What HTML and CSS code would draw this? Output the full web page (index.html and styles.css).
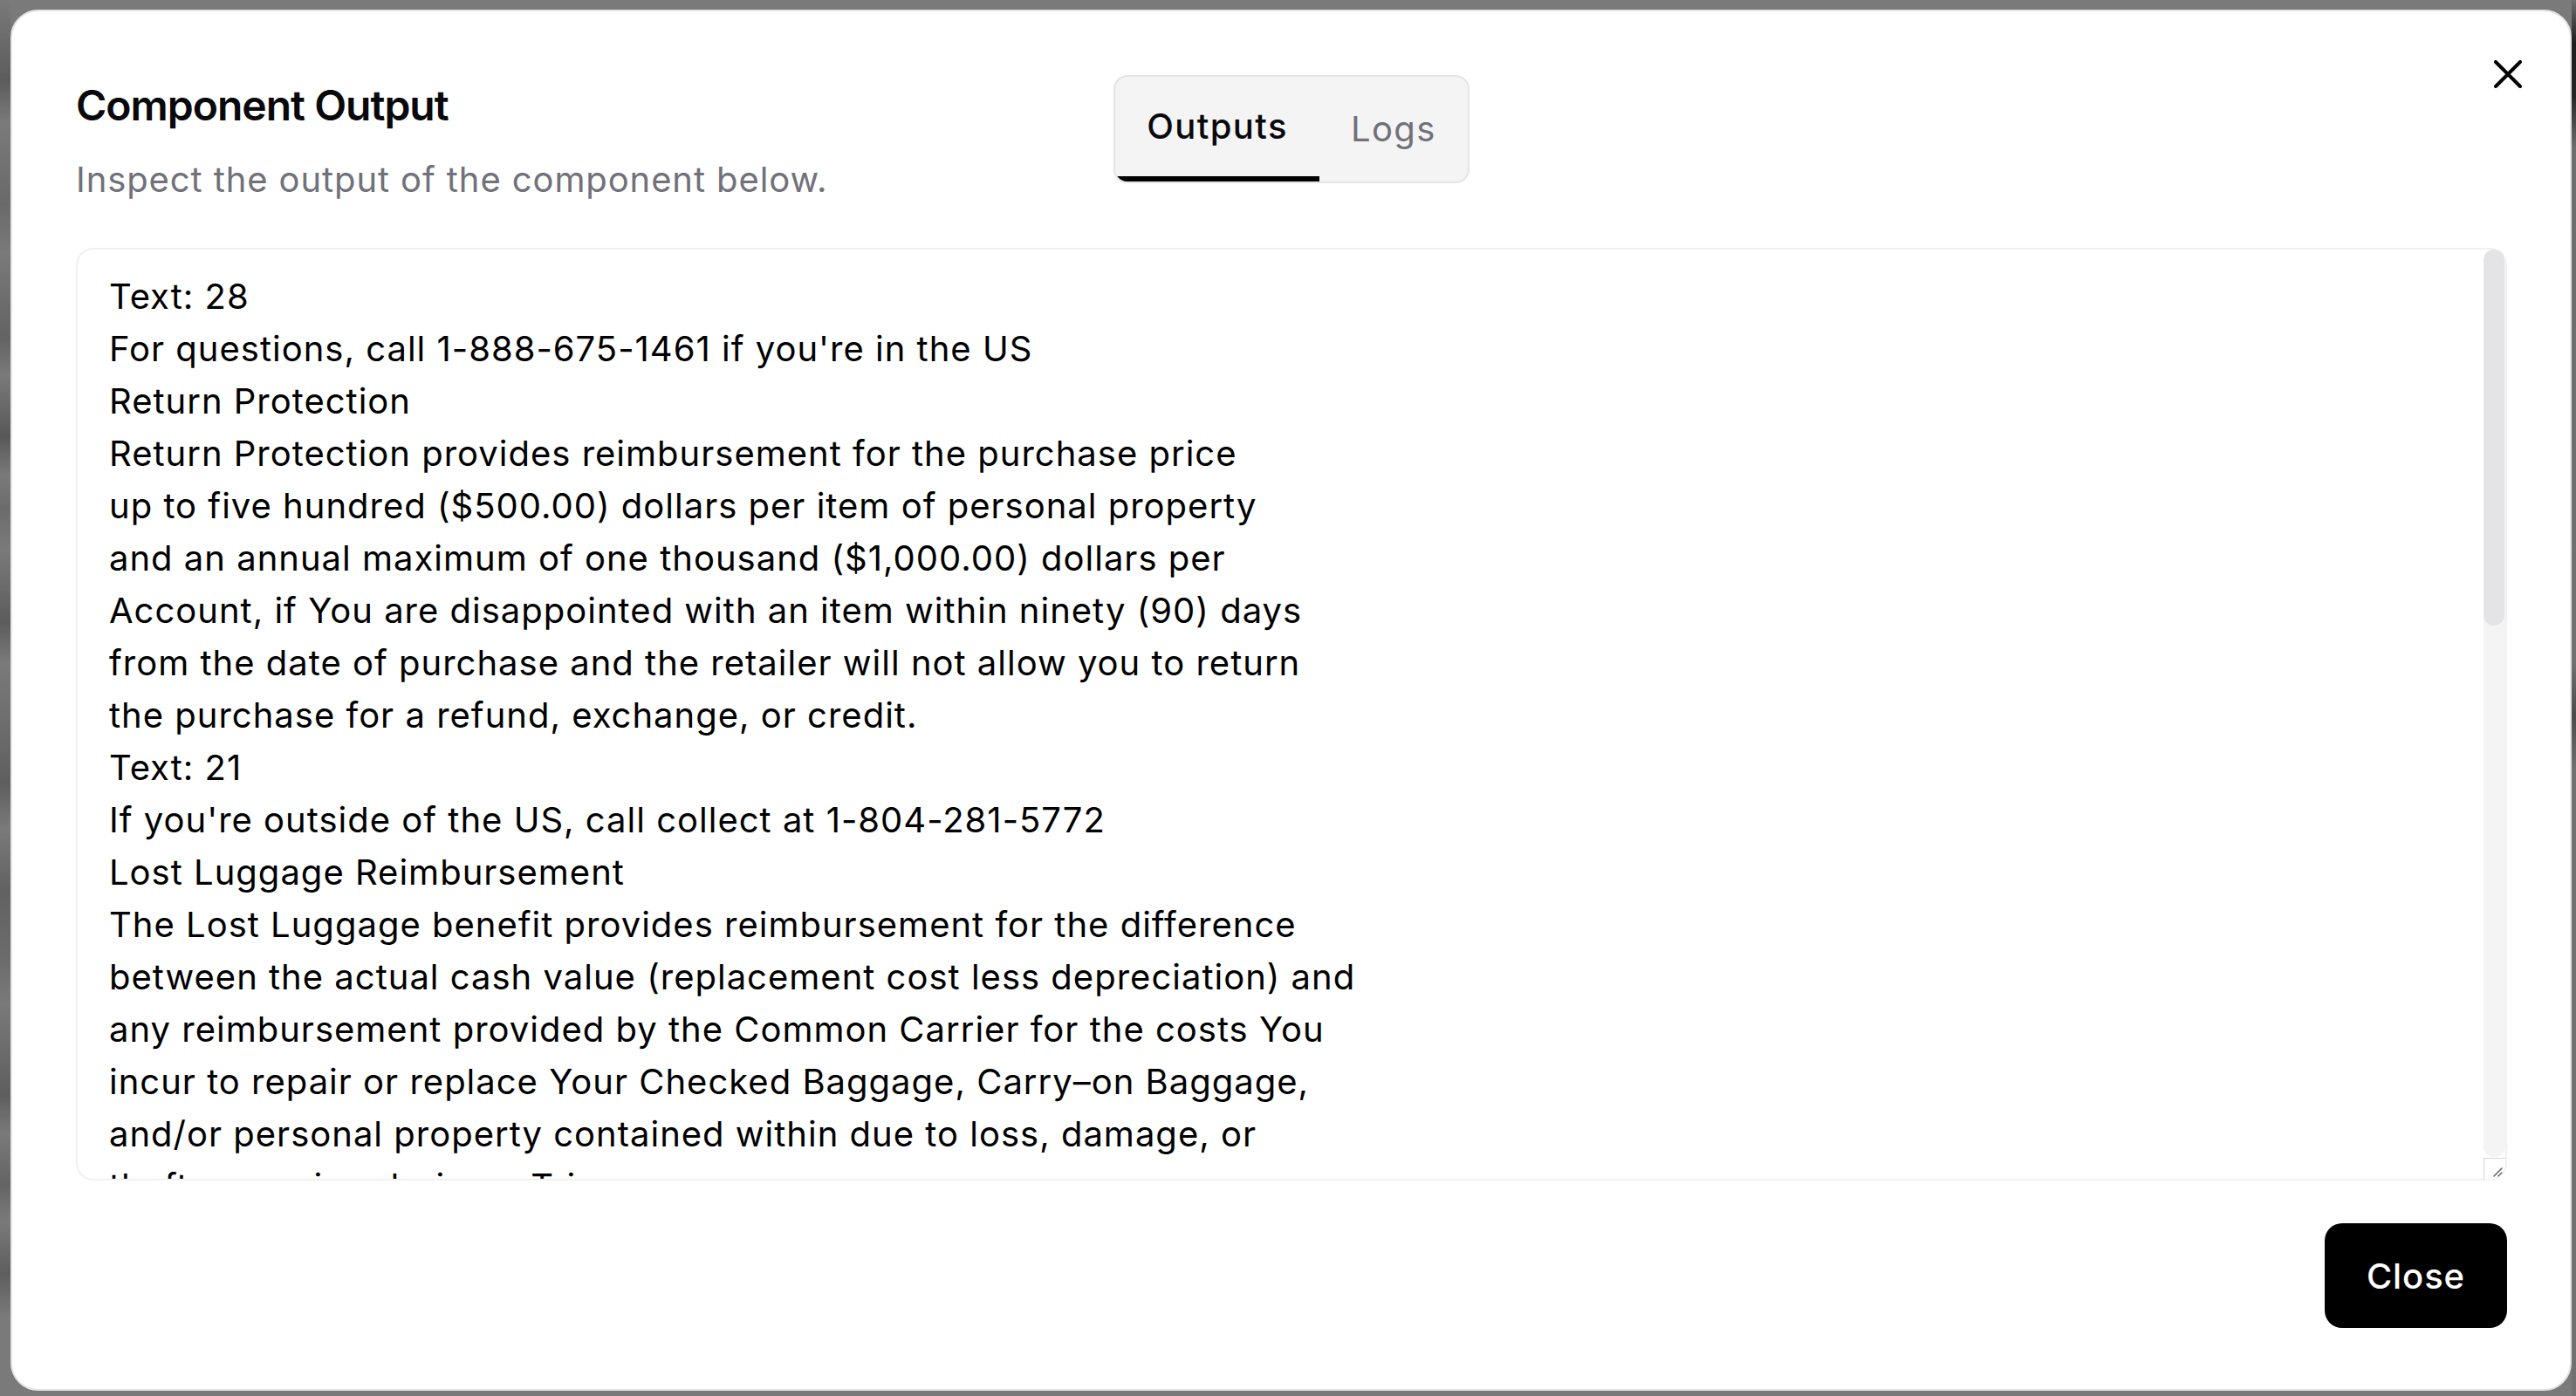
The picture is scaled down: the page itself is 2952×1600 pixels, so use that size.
FILE: index.html
```html
<!DOCTYPE html>
<html lang="en">
<head>
<meta charset="utf-8">
<title>Component Output</title>
<link rel="stylesheet" href="styles.css">
</head>
<body>
<div class="backdrop">
  <div class="dialog" role="dialog">
    <button class="close-x" aria-label="Close">
      <svg width="32" height="32" viewBox="0 0 32 32" fill="none" stroke="currentColor" stroke-width="4" stroke-linecap="round"><path d="M2 2L30 30M30 2L2 30"/></svg>
    </button>
    <div class="header">
      <div class="heading">
        <h2 class="title">Component Output</h2>
        <p class="desc">Inspect the output of the component below.</p>
      </div>
      <div class="tabs">
        <button class="tab active">Outputs</button>
        <button class="tab">Logs</button>
      </div>
      <div class="spacer"></div>
    </div>
    <div class="field">
      <textarea class="output" readonly>Text: 28
For questions, call 1-888-675-1461 if you're in the US
Return Protection
Return Protection provides reimbursement for the purchase price
up to five hundred ($500.00) dollars per item of personal property
and an annual maximum of one thousand ($1,000.00) dollars per
Account, if You are disappointed with an item within ninety (90) days
from the date of purchase and the retailer will not allow you to return
the purchase for a refund, exchange, or credit.
Text: 21
If you're outside of the US, call collect at 1-804-281-5772
Lost Luggage Reimbursement
The Lost Luggage benefit provides reimbursement for the difference
between the actual cash value (replacement cost less depreciation) and
any reimbursement provided by the Common Carrier for the costs You
incur to repair or replace Your Checked Baggage, Carry–on Baggage,
and/or personal property contained within due to loss, damage, or
theft occurring during a Trip.
Text: 25
Call the Benefit Administrator at 1-888-675-1461
Baggage Delay Reimbursement
Baggage Delay reimburses You for the emergency purchase of
essential items needed by You and Your Immediate Family Members
as a result of a Baggage Delay for up to one hundred ($100.00)
dollars per day for a maximum of five (5) days.
Text: 19
Claims must be filed within sixty (60) days of the loss
Trip Delay Reimbursement
If Your Common Carrier travel is delayed more than twelve (12)
hours or requires an overnight stay, You and Your Immediate
Family Members are covered for reasonable expenses such as
meals, lodging, toiletries, medication and other personal use
items, up to five hundred ($500.00) dollars per ticket.
Text: 17
Coverage applies only when the entire fare is charged to Your Account
Trip Cancellation and Trip Interruption
If Your Trip is canceled or cut short by sickness, severe weather
and other covered situations, You can be reimbursed up to ten
thousand ($10,000.00) dollars per person and twenty thousand
($20,000.00) dollars per Trip for Your pre-paid, non-refundable
travel expenses, including passenger fares, tours and hotels.
Text: 14</textarea>
      <div class="scrollbar" aria-hidden="true">
        <div class="track"><div class="thumb"></div></div>
        <div class="resizer">
          <svg width="24" height="24" viewBox="0 0 24 24" fill="none" stroke="#6b6b6b" stroke-width="1.6" stroke-linecap="round"><path d="M20 11L11 20M20 16L16 20"/></svg>
        </div>
      </div>
    </div>
    <div class="footer">
      <button class="btn-close">Close</button>
    </div>
  </div>
</div>
</body>
</html>
```
FILE: styles.css
```css
html, body {
  margin: 0;
  height: 100%;
}

body {
  font-family: Inter, "Noto Sans", sans-serif;
  background: #7a7a7a;
  overflow: hidden;
}

.backdrop {
  box-sizing: border-box;
  height: 1600px;
  padding: 11px 5px 6px 12px;
  display: flex;
  background:
    linear-gradient(to bottom,
      #7a7a7a 0, #5c5c5c 92px, #7a7a7a 140px,
      #6a6a6a 235px, #7a7a7a 290px,
      #636363 388px, #7a7a7a 430px,
      #585858 500px, #7a7a7a 545px,
      #6c6c6c 582px, #7a7a7a 630px,
      #5c5c5c 714px, #7a7a7a 760px,
      #6a6a6a 847px, #5e5e5e 898px, #7a7a7a 950px,
      #626262 1020px, #6c6c6c 1102px, #7a7a7a 1150px,
      #5e5e5e 1255px, #7a7a7a 1300px,
      #646464 1357px, #7a7a7a 1400px,
      #5e5e5e 1459px, #7a7a7a 1510px) left top / 12px 100% no-repeat,
    linear-gradient(to bottom,
      #6e6e6e 0, #1e1e1e 50px, #262626 110px, #6e6e6e 170px,
      #707070 760px, #4c4c4c 820px, #707070 880px, #707070 100%) right top / 5px 100% no-repeat,
    #7a7a7a;
}

.dialog {
  position: relative;
  flex: 1;
  box-sizing: border-box;
  display: flex;
  flex-direction: column;
  background: #ffffff;
  border: 2px solid #e4e4e7;
  border-radius: 32px;
  padding: 72px 72px 70px 73px;
}

.close-x {
  position: absolute;
  top: 56px;
  right: 55px;
  width: 32px;
  height: 32px;
  padding: 0;
  border: 0;
  background: none;
  color: #000;
  display: flex;
}

.header {
  display: grid;
  grid-template-columns: 1fr auto 1fr;
  align-items: start;
}

.title {
  margin: 0;
  font-size: 48px;
  font-weight: 600;
  line-height: 72px;
  color: #09090b;
  letter-spacing: -1px;
}

.desc {
  margin: 19px 0 0;
  font-size: 40px;
  line-height: 60px;
  color: #71717a;
  letter-spacing: 0.9px;
}

.tabs {
  margin-top: 1px;
  display: flex;
  box-sizing: border-box;
  height: 124px;
  border: 2px solid #e4e4e7;
  border-radius: 16px;
  background: #f4f4f5;
  overflow: hidden;
}

.tab {
  box-sizing: border-box;
  height: 120px;
  display: flex;
  align-items: center;
  padding: 0 36px;
  border: 0;
  background: none;
  font-family: Inter, "Noto Sans", sans-serif;
  font-size: 40px;
  line-height: 60px;
  font-weight: 400;
  letter-spacing: 1.4px;
  color: #71717a;
}

.tab.active {
  color: #09090b;
  font-weight: 500;
  border-bottom: 6px solid #000;
}

.field {
  position: relative;
  flex: 1 1 0;
  min-height: 0;
  margin-top: 48px;
  display: flex;
}

.output {
  flex: 1;
  box-sizing: border-box;
  height: 100%;
  border: 2px solid #f1f1f2;
  border-radius: 20px;
  padding: 24px 64px 24px 36px;
  font-family: Inter, "Noto Sans", sans-serif;
  font-size: 40px;
  line-height: 60px;
  letter-spacing: 1px;
  color: #000;
  background: #fff;
  outline: none;
  resize: none;
  overflow: hidden;
}

.scrollbar {
  position: absolute;
  top: 2px;
  right: 2px;
  bottom: 1px;
  width: 25px;
  display: flex;
  flex-direction: column;
}

.track {
  flex: 1;
  background: #f4f4f5;
  border-radius: 12px;
}

.thumb {
  width: 24px;
  height: 431px;
  border-radius: 12px;
  background: #e4e4e7;
}

.resizer {
  box-sizing: border-box;
  height: 25px;
  margin-top: 1px;
  background: #fff;
  border-left: 1px solid #d4d4d8;
  border-top: 1px solid #d4d4d8;
  display: flex;
  border-bottom-right-radius: 18px;
  overflow: hidden;
}

.footer {
  margin-top: 49px;
  display: flex;
  justify-content: flex-end;
}

.btn-close {
  height: 120px;
  padding: 0 48px;
  border: 0;
  border-radius: 20px;
  background: #000;
  color: #fff;
  font-family: Inter, "Noto Sans", sans-serif;
  font-size: 40px;
  font-weight: 500;
  letter-spacing: 0.9px;
}
```
